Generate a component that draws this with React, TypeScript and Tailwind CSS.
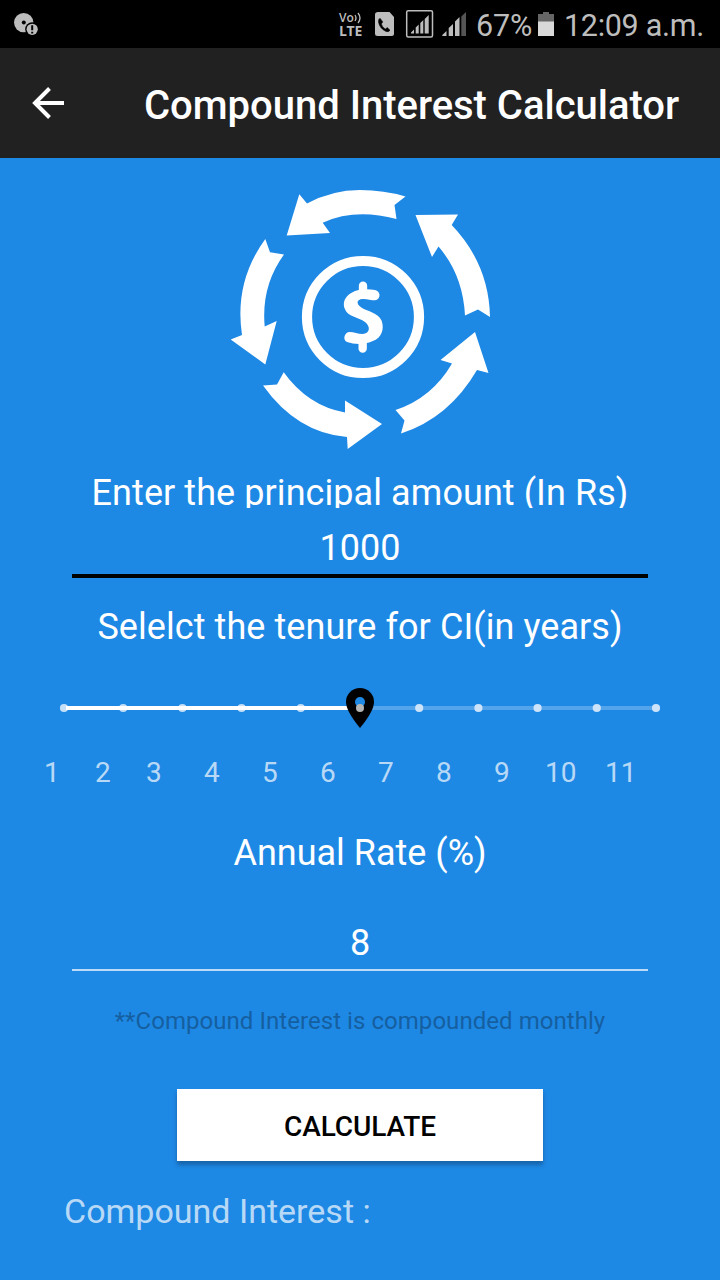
import React from "react";

const TICKS = Array.from({ length: 11 }, (_, i) => i);
const LABELS = [
  { n: "1", w: "w-[51px]" },
  { n: "2", w: "w-[51px]" },
  { n: "3", w: "w-[58px]" },
  { n: "4", w: "w-[58px]" },
  { n: "5", w: "w-[58px]" },
  { n: "6", w: "w-[58px]" },
  { n: "7", w: "w-[58px]" },
  { n: "8", w: "w-[58px]" },
  { n: "9", w: "w-[51px]" },
  { n: "10", w: "w-[60px]" },
  { n: "11", w: "w-[53px]" },
];

function StatusBar() {
  return (
    <div className="flex h-12 items-start bg-black text-[#bdbdbd]">
      <svg className="ml-3 h-12 w-[30px]" viewBox="12 0 30 48">
        <circle cx="23.7" cy="22.6" r="9.7" fill="#bdbdbd" />
        <circle cx="23.8" cy="22.5" r="2" fill="#000" />
        <circle cx="32.2" cy="29.3" r="7" fill="#000" />
        <circle cx="32.2" cy="29.3" r="5.6" fill="#bdbdbd" />
        <path d="M32.2 25.3v5M32.2 31.7v1.8" stroke="#000" strokeWidth="2" />
      </svg>
      <div className="ml-[297px] mt-[11px] flex w-[28px] flex-col font-['Open_Sans',sans-serif] font-semibold">
        <span className="flex h-[14px] text-[12px] leading-[14px]">
          Vo
          <svg className="mt-px h-[12px] w-[8px] shrink-0" viewBox="0 0 8 12" fill="none" stroke="#bdbdbd" strokeWidth="1.3">
            <path d="M1 3q2 3 0 6M4 1q4 5 0 10" />
          </svg>
        </span>
        <span className="text-[14px] font-bold leading-[12px] tracking-[-0.3px]">LTE</span>
      </div>
      <svg className="h-12 w-[103px]" viewBox="367 0 103 48">
        <path d="M378 12h11.5l4.5 5v16.500q0 2.500-2.500 2.500H377.500q-2.500 0-2.500-2.500V14.500q0-2.500 3-2.500z" fill="#bdbdbd" />
        <path d="M380 18.200q-2 1-1.500 4q1.200 6 7 9q3 1.500 4.500-1l-2.700-2.600-2 1.500q-3-1.800-4-5.200l1.500-2z" fill="#000" stroke="#000" strokeWidth=".5" strokeLinejoin="round" />
        <rect x="406.700" y="10.700" width="25.800" height="26.300" rx="1.500" fill="none" stroke="#bdbdbd" strokeWidth="1.500" />
        <path d="M411 33.500v-1l3-3v4zM415.700 33.500v-6l3-3v9zM420.300 33.500v-10.500l3-3v13.500zM424.700 33.500v-14.500l4-4v18.500z" fill="#bdbdbd" />
        <path d="M442.300 36v-1l4.200-4v5zM448.700 36v-8l4.300-4v12zM455 36v-14.500l4.500-4.500v19z" fill="#bdbdbd" />
        <path d="M461.300 36V16.500l4.700-4.500v24z" fill="#555" />
      </svg>
      <span className="ml-[6px] w-[62px] whitespace-nowrap text-[30.500px] leading-[51px] tracking-[-0.2px]">67%</span>
      <svg className="h-12 w-4" viewBox="538 0 16 48">
        <path d="M538 14h5v-2h6v2h5v8h-16z" fill="#666" />
        <path d="M538 21.500h16V36h-16z" fill="#d9d9d9" />
      </svg>
      <span className="ml-[10px] whitespace-nowrap text-[30.500px] leading-[51px] tracking-[-0.3px]">12:09 a.m.</span>
    </div>
  );
}

function CycleLogo() {
  return (
    <svg className="mx-auto block h-[272px] w-[272px] shrink-0" viewBox="224 184 272 272" fill="#fff">
      <path d="M286.700 235.500L299.300 194.300L307 203.500Q332 190 360 190Q384 190 405.500 196.500L394.500 205L396.500 219Q355 208 322.700 222.700L330 233Z" />
      <path d="M265.300 239L270 252.300L284 254.500Q261 286 264.700 326.500L276.700 321L265.300 364.500L230.700 339.500L242 335Q234 282 265.300 239Z" />
      <path d="M283.700 372.300Q308 406 345 412.500V400.500L382 424L347.700 449L347 437Q297 433 263 385.500L277 384.500Z" />
      <path d="M475 332L488.500 373L477 370Q449 418 401 433.500L404.500 420.500L395.500 410Q432 398 452 363.500L440.500 360Z" />
      <path d="M415.500 215L458 214.500L451.700 225Q489 264 490 317L478 309.500L465 315.500Q463 275 438.500 246.500L432 257Z" />
      <circle cx="363" cy="317" r="56" fill="none" stroke="#fff" strokeWidth="10.200" />
      <g transform="translate(325 270) scale(.33333)">
        <path d="M150 60C128 56 100 56 80 68C58 80 52 100 60 118C68 140 100 142 120 156C135 168 135 184 122 190C108 196 90 186 74 186C58 186 52 210 66 216C90 224 118 224 142 214C172 202 178 176 170 152C160 128 125 124 108 112C92 100 96 88 112 87C125 86 138 91 150 91C168 88 168 64 150 60Z" />
        <path d="M114 47V70M113 212V236" stroke="#fff" strokeWidth="25" strokeLinecap="round" />
      </g>
    </svg>
  );
}

function TenureSlider() {
  return (
    <svg className="mx-auto block h-12 w-[608px]" viewBox="56 684 608 48">
      <path d="M64 708H656" stroke="#fff" strokeOpacity=".24" strokeWidth="4" />
      <path d="M64 708H350" stroke="#fff" strokeWidth="4" />
      {TICKS.map((i) => (
        <circle key={i} cx={64 + i * 59.2} cy="708" r="4.1" fill={i < 6 ? "#c4dff8" : "#cce3fa"} />
      ))}
      <path d="M66 708H345" stroke="#fff" strokeWidth="4" />
      <path d="M360 728Q346 711 346 702a14 14 0 0 1 28 0Q374 711 360 728z" fill="#000" />
      <circle cx="360" cy="702" r="5" fill="#1e88e5" />
      <circle cx="360" cy="708" r="4" fill="#b5b5b5" />
    </svg>
  );
}

export default function App() {
  return (
    <main className="flex h-[1280px] w-[720px] flex-col overflow-hidden bg-[#1e88e5] font-['Roboto',sans-serif] text-white">
      <StatusBar />
      <header className="flex h-[110px] shrink-0 items-center bg-[#212121]">
        <svg className="ml-8 h-8 w-8" viewBox="0 0 32 32" fill="none" stroke="#fff" strokeWidth="4">
          <path d="M32 16H4M17.500 1.500L3 16L17.500 30.500" />
        </svg>
        <h1 className="ml-20 mt-[6px] whitespace-nowrap text-[40px] font-medium leading-[48px] tracking-[-0.02px]">Compound Interest Calculator</h1>
      </header>
      <div className="flex flex-col pt-[26px]">
        <CycleLogo />
        <div className="mt-[16px] h-9 overflow-hidden text-center text-[36px] leading-[42px] tracking-[0.07px]">
          Enter the principal amount (In Rs)
        </div>
        <div className="mx-[72px] h-[70px] border-b-4 border-black pt-[19px] text-center text-[36px] leading-[42px]">1000</div>
        <div className="mt-[28px] h-[42px] text-center text-[36px] leading-[42px] tracking-[0.07px]">Selelct the tenure for CI(in years)</div>
        <div className="mt-[36px]">
          <TenureSlider />
        </div>
        <div className="ml-11 mt-6 flex text-[28px] leading-[33px] text-white/70">
          {LABELS.map((l) => (
            <span key={l.n} className={l.w}>{l.n}</span>
          ))}
        </div>
        <div className="mt-[43px] text-center text-[36px] leading-[42px]">Annual Rate (%)</div>
        <div className="mx-[72px] mt-[48px] h-[49px] border-b-2 border-white/70 text-center text-[36px] leading-[42px]">8</div>
        <p className="mt-9 text-center text-[24px] leading-[28px] tracking-[0.05px] text-[#155fa0]">**Compound Interest is compounded monthly</p>
        <button className="mx-auto mt-[54px] h-[72px] w-[366px] bg-white pt-[3px] text-[28px] font-medium tracking-[-0.1px] text-black shadow-[0_4px_4px_rgba(0,0,0,0.26)]">CALCULATE</button>
        <div className="ml-16 mt-[30px] text-[34px] leading-10 text-white/70">Compound Interest :</div>
      </div>
    </main>
  );
}
